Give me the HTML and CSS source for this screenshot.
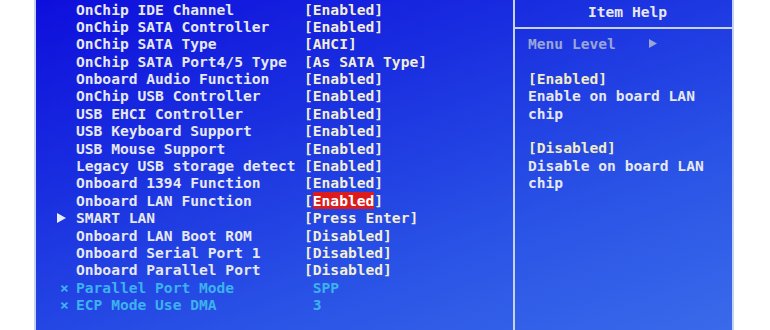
FILE: index.html
```html
<!DOCTYPE html>
<html>
<head>
<meta charset="utf-8">
<link rel="stylesheet" href="styles.css">
</head>
<body>
<div class="screen">
  <div class="main">
    <div class="row"><span class="mark"></span><span class="label">OnChip IDE Channel</span><span class="value">[Enabled]</span></div>
    <div class="row"><span class="mark"></span><span class="label">OnChip SATA Controller</span><span class="value">[Enabled]</span></div>
    <div class="row"><span class="mark"></span><span class="label">OnChip SATA Type</span><span class="value">[AHCI]</span></div>
    <div class="row"><span class="mark"></span><span class="label">OnChip SATA Port4/5 Type</span><span class="value">[As SATA Type]</span></div>
    <div class="row"><span class="mark"></span><span class="label">Onboard Audio Function</span><span class="value">[Enabled]</span></div>
    <div class="row"><span class="mark"></span><span class="label">OnChip USB Controller</span><span class="value">[Enabled]</span></div>
    <div class="row"><span class="mark"></span><span class="label">USB EHCI Controller</span><span class="value">[Enabled]</span></div>
    <div class="row"><span class="mark"></span><span class="label">USB Keyboard Support</span><span class="value">[Enabled]</span></div>
    <div class="row"><span class="mark"></span><span class="label">USB Mouse Support</span><span class="value">[Enabled]</span></div>
    <div class="row"><span class="mark"></span><span class="label">Legacy USB storage detect</span><span class="value">[Enabled]</span></div>
    <div class="row"><span class="mark"></span><span class="label">Onboard 1394 Function</span><span class="value">[Enabled]</span></div>
    <div class="row"><span class="mark"></span><span class="label">Onboard LAN Function</span><span class="value">[<span class="sel">Enabled</span>]</span></div>
    <div class="row"><span class="mark"><svg class="tri" width="9" height="10" viewBox="0 0 9 10"><path d="M0 0 L9 5 L0 10 Z" fill="#e8ecf8"/></svg></span><span class="label">SMART LAN</span><span class="value">[Press Enter]</span></div>
    <div class="row"><span class="mark"></span><span class="label">Onboard LAN Boot ROM</span><span class="value">[Disabled]</span></div>
    <div class="row"><span class="mark"></span><span class="label">Onboard Serial Port 1</span><span class="value">[Disabled]</span></div>
    <div class="row"><span class="mark"></span><span class="label">Onboard Parallel Port</span><span class="value">[Disabled]</span></div>
    <div class="row dim"><span class="mark">×</span><span class="label">Parallel Port Mode</span><span class="value"> SPP</span></div>
    <div class="row dim"><span class="mark">×</span><span class="label">ECP Mode Use DMA</span><span class="value"> 3</span></div>
  </div>
  <div class="help">
    <div class="help-head">Item Help</div>
    <div class="help-body">
      <div class="hl menu">Menu Level <svg class="tri-s" width="8" height="9" viewBox="0 0 8 9"><path d="M0 0 L8 4.5 L0 9 Z" fill="#9aa6d8"/></svg></div>
      <div class="hl">&nbsp;</div>
      <div class="hl opt">[Enabled]</div>
      <div class="hl">Enable on board LAN</div>
      <div class="hl">chip</div>
      <div class="hl">&nbsp;</div>
      <div class="hl opt">[Disabled]</div>
      <div class="hl">Disable on board LAN</div>
      <div class="hl">chip</div>
    </div>
  </div>
</div>
</body>
</html>
```
FILE: styles.css
```css
html, body {
  margin: 0;
  padding: 0;
  background: #ffffff;
}
body {
  width: 770px;
  height: 330px;
  overflow: hidden;
}
.screen {
  margin-left: 34px;
  width: 696px;
  height: 330px;
  display: flex;
  border-left: 2px solid #c6d2f2;
  border-right: 2px solid #c6d2f2;
  background: linear-gradient(160deg, #0e0edc 0%, #1a30e0 35%, #2a54e6 70%, #3a6aea 100%);
  font-family: "DejaVu Sans Mono", "Liberation Mono", monospace;
  font-weight: bold;
  font-size: 14.6px;
}
.main {
  flex: 0 0 477px;
  padding-top: 0.5px;
  padding-left: 20px;
  box-sizing: border-box;
}
.row {
  display: grid;
  grid-template-columns: 20px 228px auto;
  height: 17.4px;
  line-height: 17.4px;
  color: #e6e8f2;
}
.label, .value {
  white-space: pre;
}
.mark {
  display: flex;
  align-items: center;
  justify-content: flex-start;
  padding-left: 1px;
}
.value {
  color: #f2eed8;
}
.sel {
  background: #dc1c1c;
  color: #ffffff;
}
.row.dim .label,
.row.dim .value,
.row.dim .mark {
  color: #3cb2ee;
}
.row.dim .mark {
  padding-left: 4px;
}
.help {
  flex: 1;
  border-left: 2px solid #c6d2f2;
}
.help-head {
  height: 27px;
  line-height: 24px;
  border-bottom: 2px solid #c6d2f2;
  text-align: center;
  color: #e6e8f2;
  padding-left: 8px;
}
.help-body {
  padding-top: 6px;
  padding-left: 13px;
}
.hl {
  height: 17.4px;
  line-height: 17.4px;
  color: #e6e8f2;
  white-space: pre;
}
.hl.menu {
  color: #9aa6d8;
  display: flex;
  align-items: center;
}
.tri-s {
  margin-left: 24px;
}
.hl.opt {
  color: #f2ecc4;
}
```
